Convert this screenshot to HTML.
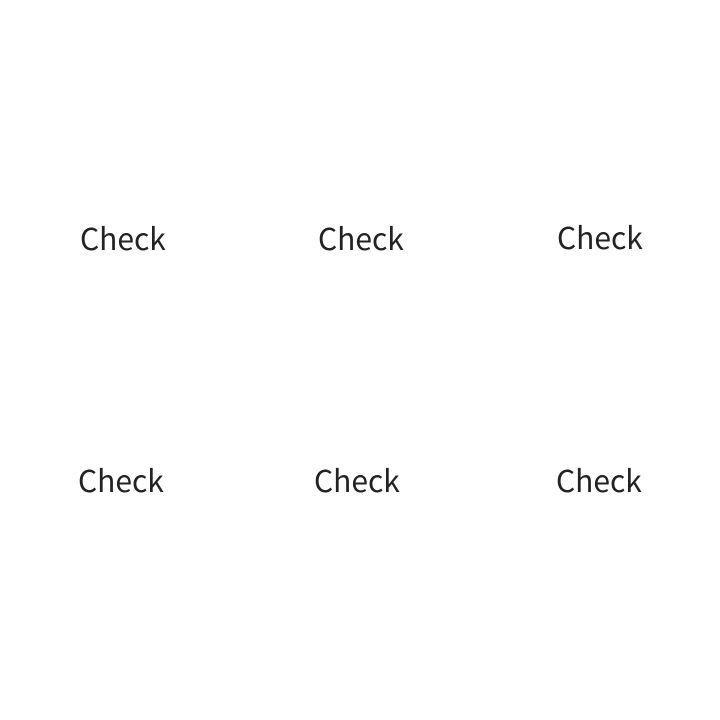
<!DOCTYPE html>
<html><head><style>
html,body{margin:0;padding:0;background:#fff;width:720px;height:720px;overflow:hidden}
div{position:absolute;font-family:"Noto Sans CJK JP",sans-serif;font-size:30px;color:#222;line-height:1;white-space:nowrap}
</style></head><body>
<div style="left:80px;top:222px">Check</div>
<div style="left:318px;top:222px">Check</div>
<div style="left:557px;top:221px">Check</div>
<div style="left:78px;top:464px">Check</div>
<div style="left:314px;top:464px">Check</div>
<div style="left:556px;top:464px">Check</div>
</body></html>
